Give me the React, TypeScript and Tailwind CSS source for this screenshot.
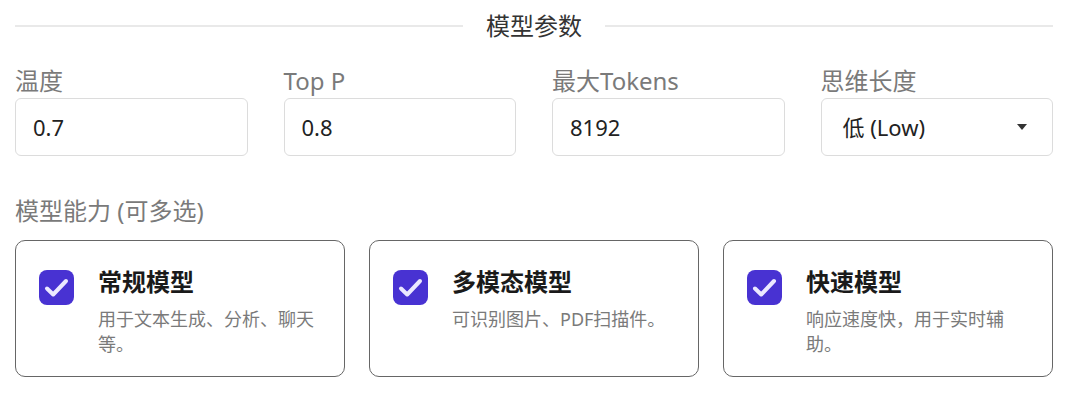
import React from 'react';

const fields = [
  {label: '温度', value: '0.7'},
  {label: 'Top P', value: '0.8'},
  {label: '最大Tokens', value: '8192'},
];

const abilities = [
  {title: '常规模型', desc: '用于文本生成、分析、聊天等。'},
  {title: '多模态模型', desc: '可识别图片、PDF扫描件。'},
  {title: '快速模型', desc: '响应速度快，用于实时辅助。'},
];

const CheckIcon = () => (
  <div className="w-[35px] h-[35px] shrink-0 rounded-[8px] bg-[#4832d2] mt-[5px]">
    <svg width="35" height="35" viewBox="0 0 35 35" fill="none">
      <path
        d="M8 18.5 L14.2 24.5 L27 11"
        stroke="#ebe8ff"
        strokeWidth="4"
        strokeLinecap="round"
        strokeLinejoin="round"
      />
    </svg>
  </div>
);

const App: React.FC = () => {
  return (
    <div className="w-[1080px] h-[401px] bg-white pl-[15px] pr-[27px] pt-[10px] font-['Noto_Sans','Noto_Sans_CJK_SC',sans-serif] overflow-hidden">
      {/* section divider */}
      <div className="flex items-center h-8">
        <div className="flex-1 h-[2px] bg-[#e9e9e9]" />
        <span className="mx-[23px] text-[24px] leading-8 text-[#333]">模型参数</span>
        <div className="flex-1 h-[2px] bg-[#e9e9e9]" />
      </div>

      {/* params */}
      <div className="grid grid-cols-4 gap-x-9 mt-[23px]">
        {fields.map((f) => (
          <div key={f.label} className="flex flex-col">
            <label className="text-[24px] leading-8 text-[#7a7a7a] mb-[1px]">{f.label}</label>
            <input
              readOnly
              defaultValue={f.value}
              className="h-[58px] w-full border border-[#dcdcdc] rounded-[6px] px-[17px] text-[22px] text-[#222] outline-none bg-white"
            />
          </div>
        ))}
        <div className="flex flex-col">
          <label className="text-[24px] leading-8 text-[#7a7a7a] mb-[1px]">思维长度</label>
          <div className="h-[58px] w-full border border-[#dcdcdc] rounded-[6px] pl-[21px] pr-[25px] flex items-center justify-between bg-white">
            <span className="text-[22px] text-[#222]">低 (Low)</span>
            <svg width="10" height="6" viewBox="0 0 10 6">
              <path d="M0 0 L10 0 L5 6 Z" fill="#333" />
            </svg>
          </div>
        </div>
      </div>

      {/* abilities */}
      <div className="mt-[39px] text-[24px] leading-8 text-[#7a7a7a]">模型能力 (可多选)</div>
      <div className="grid grid-cols-3 gap-6 mt-[13px]">
        {abilities.map((a) => (
          <div
            key={a.title}
            className="h-[137px] border border-[#666] rounded-[10px] pl-[23px] pr-[24px] pt-[24px] flex gap-6"
          >
            <CheckIcon />
            <div className="flex flex-col min-w-0">
              <div className="text-[24px] leading-[34px] font-bold text-[#1a1a1a]">{a.title}</div>
              <div className="mt-2 text-[18px] leading-[25px] text-[#7a7a7a]">{a.desc}</div>
            </div>
          </div>
        ))}
      </div>
    </div>
  );
};

export default App;
